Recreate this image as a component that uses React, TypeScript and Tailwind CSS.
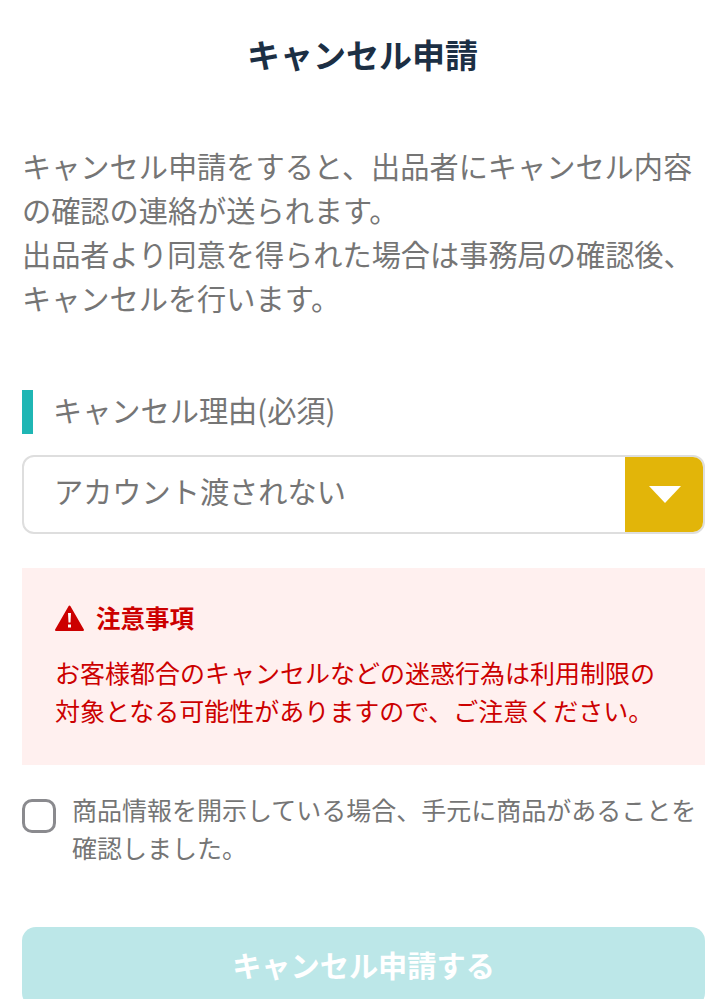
const jp = "font-['Noto_Sans_CJK_JP','Noto_Sans',sans-serif]";

export default function App() {
  return (
    <div className={`w-[725px] h-[999px] overflow-hidden bg-white ${jp}`}>
      <h1 className="pt-[28px] text-center text-[33px] leading-[52px] font-bold text-[#1c2f44]">キャンセル申請</h1>
      <p className="mt-[63px] px-[22px] text-[29.200px] leading-[44px] text-[#757575]">
        キャンセル申請をすると、出品者にキャンセル内容の確認の連絡が送られます。
        <br />
        出品者より同意を得られた場合は事務局の確認後、キャンセルを行います。
      </p>
      <div className="mt-[71px] mx-[22px] flex items-center h-[44px]">
        <span className="w-[11px] h-[44px] bg-[#1fb6b4]" />
        <span className="ml-[20px] pb-[4px] text-[29.200px] text-[#757575]">キャンセル理由(必須)</span>
      </div>
      <div className="mt-[21px] ml-[22px] mr-[20px] h-[79px] flex border-2 border-[#dedede] rounded-[12px] overflow-hidden">
        <span className="flex-1 pl-[30px] text-[29.200px] leading-[67px] text-[#757575]">アカウント渡されない</span>
        <span className="w-[78px] pl-[2px] bg-[#e2b509] flex items-center justify-center">
          <svg width="32" height="18" viewBox="0 0 32 18"><path d="M0 0h32L16 17z" fill="#fff" /></svg>
        </span>
      </div>
      <div className="mt-[34px] ml-[22px] mr-[20px] h-[197px] bg-[#fff0ef] pt-[32px] pl-[33px]">
        <div className="flex items-center gap-[12px] h-[36px]">
          <svg width="29" height="26" viewBox="0 0 29 26">
            <path d="M14.500 1.500 28 25H1z" fill="#cc0000" stroke="#cc0000" strokeWidth="2" strokeLinejoin="round" />
            <path d="M13 8h3l-.5 9.500h-2zM13 19.500h3v3h-3z" fill="#fff" />
          </svg>
          <span className="text-[24.500px] font-bold text-[#cc0000]">注意事項</span>
        </div>
        <p className="mt-[17px] text-[25px] leading-[38px] text-[#cc0000]">
          お客様都合のキャンセルなどの迷惑行為は利用制限の
          <br />
          対象となる可能性がありますので、ご注意ください。
        </p>
      </div>
      <label className="mt-[26px] ml-[22px] mr-[20px] flex">
        <span className="mt-[8px] w-[34px] h-[34px] shrink-0 rounded-[10px] border-[3px] border-[#8a8a8e] bg-white" />
        <span className="ml-[16px] -mt-[1px] text-[25px] leading-[38px] text-[#757575]">
          商品情報を開示している場合、手元に商品があることを確認しました。
        </span>
      </label>
      <button className="mt-[61px] ml-[22px] w-[683px] h-[80px] pb-[5px] rounded-[14px] bg-[#bce7e8] text-white text-[29.200px] font-bold">
        キャンセル申請する
      </button>
    </div>
  );
}
